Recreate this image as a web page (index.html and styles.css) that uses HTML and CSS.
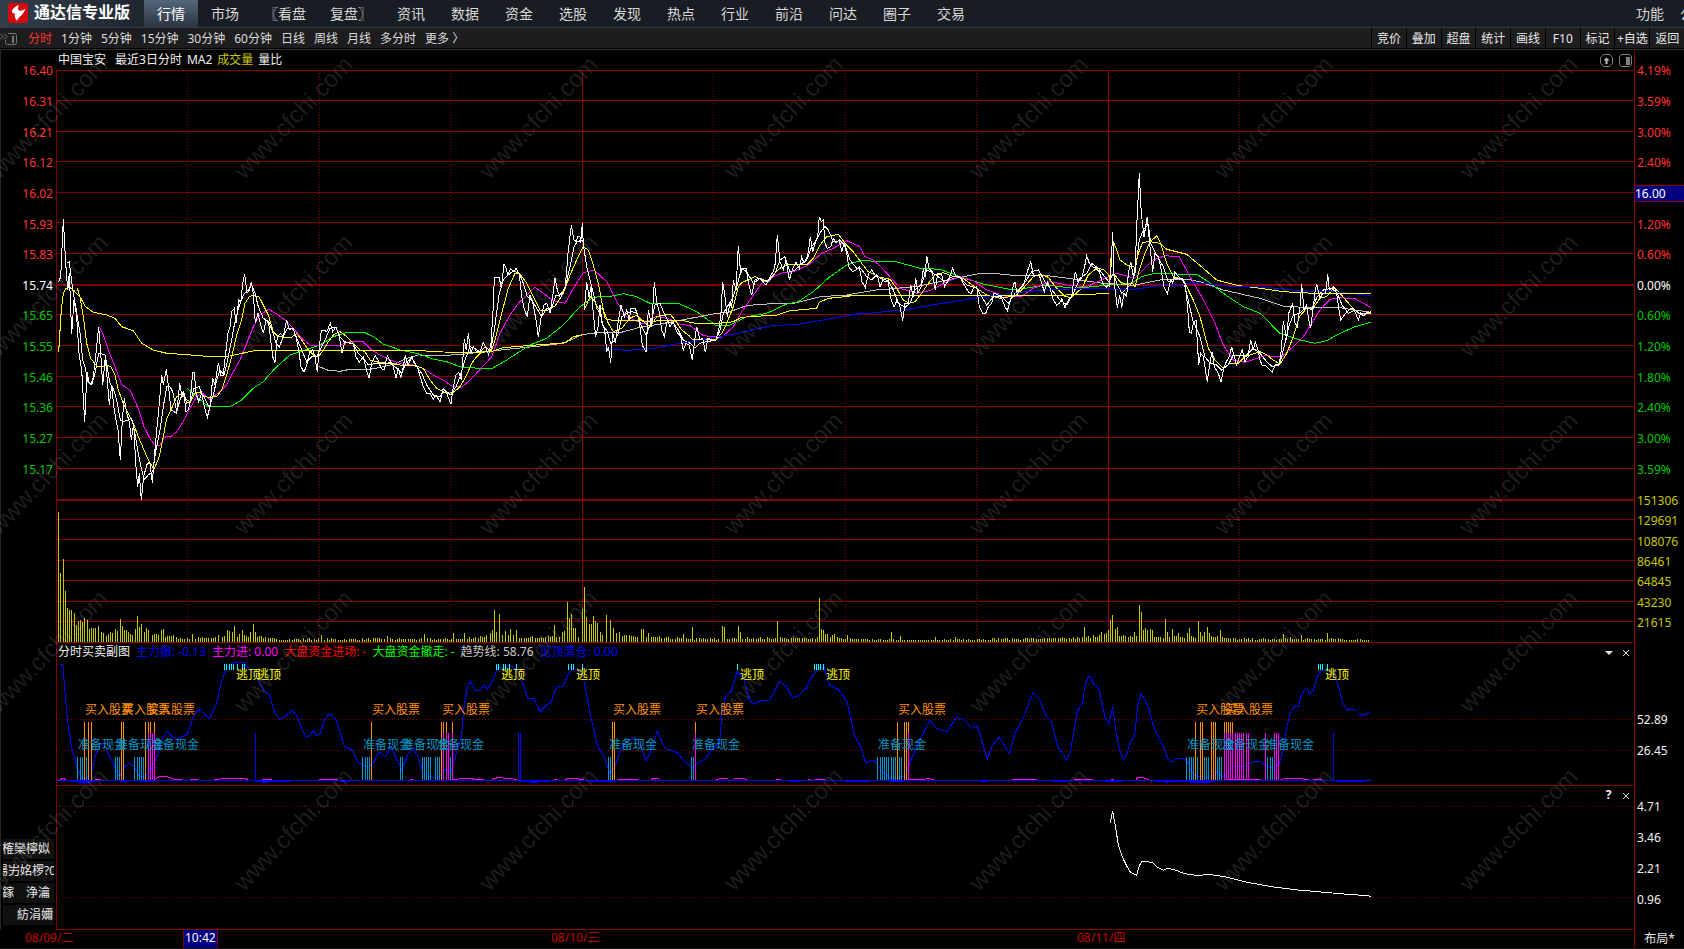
FILE: index.html
```html
<!DOCTYPE html>
<html lang="zh-CN">
<head>
<meta charset="utf-8">
<title>通达信专业版</title>
<link rel="stylesheet" href="styles.css">
</head>
<body>
<div class="app">
  <header class="topbar">
    <div class="brand">
      <svg class="logo" viewBox="0 0 20 20" aria-hidden="true">
        <rect width="20" height="20" rx="3" fill="#d40a10"/>
        <path d="M11 2C7 3.500 4 6 4 8.500C4 10 5.500 10.500 7 10.500C6.500 12.500 6.500 15 9 18C9.500 14.500 15.500 12.500 17.500 5.500C15 7.500 12.500 8 11 7.500C9.500 7 9.800 4.500 11 2Z" fill="#fff"/>
      </svg>
      <h1 class="title">通达信专业版</h1>
    </div>
    <nav class="menu">
      <a class="menu-item active" href="#">行情</a>
      <a class="menu-item" href="#">市场</a>
      <a class="menu-item" href="#">〖看盘</a>
      <a class="menu-item" href="#">复盘〗</a>
      <a class="menu-item" href="#">资讯</a>
      <a class="menu-item" href="#">数据</a>
      <a class="menu-item" href="#">资金</a>
      <a class="menu-item" href="#">选股</a>
      <a class="menu-item" href="#">发现</a>
      <a class="menu-item" href="#">热点</a>
      <a class="menu-item" href="#">行业</a>
      <a class="menu-item" href="#">前沿</a>
      <a class="menu-item" href="#">问达</a>
      <a class="menu-item" href="#">圈子</a>
      <a class="menu-item" href="#">交易</a>
    </nav>
    <nav class="extra">
      <a href="#">功能</a>
      <a href="#">公</a>
    </nav>
  </header>

  <div class="toolbar">
    <button class="tool-toggle" aria-label="侧栏">
      <svg viewBox="0 0 18 14" fill="none" stroke="#77777a"><path d="M0 1.500L3 4.500L0 7.500M4 1.500L7 4.500L4 7.500"/><path d="M8 1.500H14.500Q16.500 1.500 16.500 3.500V10.500Q16.500 12.500 14.500 12.500H7.500Q5.500 12.500 5.500 10.500V8"/><path d="M12.500 4V11M13.500 4V11"/></svg>
    </button>
    <div class="periods">
      <button class="period current">分时</button>
      <button class="period">1分钟</button>
      <button class="period">5分钟</button>
      <button class="period">15分钟</button>
      <button class="period">30分钟</button>
      <button class="period">60分钟</button>
      <button class="period">日线</button>
      <button class="period">周线</button>
      <button class="period">月线</button>
      <button class="period">多分时</button>
      <button class="period">更多&nbsp;〉</button>
    </div>
    <div class="actions">
      <button class="action">竞价</button>
      <button class="action">叠加</button>
      <button class="action">超盘</button>
      <button class="action">统计</button>
      <button class="action">画线</button>
      <button class="action">F10</button>
      <button class="action">标记</button>
      <button class="action">+自选</button>
      <button class="action">返回</button>
    </div>
  </div>

  <main class="board">
    <div class="left-axis price-left">
      <div class="axis-rows price-rows">
        <span class="up">16.40</span><span class="up">16.31</span><span class="up">16.21</span><span class="up">16.12</span><span class="up">16.02</span><span class="up">15.93</span><span class="up">15.83</span><span class="flat">15.74</span><span class="down">15.65</span><span class="down">15.55</span><span class="down">15.46</span><span class="down">15.36</span><span class="down">15.27</span><span class="down">15.17</span>
      </div>
    </div>
    <section class="panel">
      <svg class="plot" id="price" viewBox="56 50 1578 593" preserveAspectRatio="none"></svg>
      <div class="caption price-caption">
        <span class="stock">中国宝安</span><span>最近3日分时</span><span>MA2</span><span class="vol">成交量</span><span>量比</span>
        <span class="panel-tools">
          <button aria-label="上移"><svg viewBox="0 0 13 13" fill="none" stroke="#808080"><path d="M3.500 .5H9.500L12.500 3.500V9.500L9.500 12.500H3.500L.5 9.500V3.500Z"/><path d="M6.500 10V5" stroke="#c0c0c0" stroke-width="2"/><path d="M3.500 6.500L6.500 3.500L9.500 6.500Z" fill="#c0c0c0" stroke="none"/></svg></button>
          <button aria-label="侧栏"><svg viewBox="0 0 13 13" fill="none" stroke="#808080"><path d="M2.500 .5H10.500L12.500 2.500V10.500L10.500 12.500H2.500L.5 10.500V2.500Z"/><path d="M7 3H11V11H7Z" fill="#808080" stroke="none"/></svg></button>
        </span>
      </div>
    </section>
    <div class="right-axis">
      <div class="price-scale">
        <div class="axis-rows price-rows">
          <span class="up">4.19%</span><span class="up">3.59%</span><span class="up">3.00%</span><span class="up">2.40%</span><span class="cursor">16.00</span><span class="up">1.20%</span><span class="up">0.60%</span><span class="flat">0.00%</span><span class="down">0.60%</span><span class="down">1.20%</span><span class="down">1.80%</span><span class="down">2.40%</span><span class="down">3.00%</span><span class="down">3.59%</span>
        </div>
        <div class="axis-rows volume-rows">
          <span>151306</span><span>129691</span><span>108076</span><span>86461</span><span>64845</span><span>43230</span><span>21615</span>
        </div>
      </div>
    </div>

    <div class="left-axis"></div>
    <section class="panel">
      <svg class="plot" id="signal" viewBox="56 643 1578 143" preserveAspectRatio="none"></svg>
      <div class="caption">
        <span>分时买卖副图</span><span class="blue">主力撤: -0.13</span><span class="magenta">主力进: 0.00</span><span class="red">大盘资金进场: -</span><span class="green">大盘资金撤走: -</span><span class="silver">趋势线: 58.76</span><span class="blue">见顶清仓: 0.00</span>
        <span class="panel-tools">
          <button aria-label="菜单"><svg viewBox="0 0 13 13"><path d="M3 5H11L7 9Z" fill="#e0e0e0"/></svg></button>
          <button aria-label="关闭"><svg viewBox="0 0 13 13" stroke="#e0e0e0"><path d="M4 4L10 10M10 4L4 10"/></svg></button>
        </span>
      </div>
      <div class="marks" id="marks"></div>
    </section>
    <div class="right-axis"><div class="signal-scale"><div class="axis-rows signal-rows"><span>52.89</span><span>26.45</span></div></div></div>

    <div class="left-axis side-col">
      <div class="side-buttons">
        <button>榷欒檸姒</button>
        <button>瑒屴姳椤?0</button>
        <button>鎵　浄瀹</button>
        <button>：　紡涓嬭</button>
      </div>
    </div>
    <section class="panel">
      <svg class="plot" id="ratio" viewBox="56 786 1578 144" preserveAspectRatio="none"></svg>
      <div class="caption">
        <span class="panel-tools">
          <button aria-label="帮助">?</button>
          <button aria-label="关闭"><svg viewBox="0 0 13 13" stroke="#e0e0e0"><path d="M4 4L10 10M10 4L4 10"/></svg></button>
        </span>
      </div>
    </section>
    <div class="right-axis"><div class="ratio-scale"><div class="axis-rows ratio-rows"><span>4.71</span><span>3.46</span><span>2.21</span><span>0.96</span></div></div></div>
  </main>

  <footer class="timeline">
    <span>08/09/二</span>
    <span><span class="clock">10:42</span></span>
    <span>08/10/三</span>
    <span>08/11/四</span>
    <button class="layout">布局*</button>
  </footer>
  <svg class="watermark" id="watermark" aria-hidden="true"></svg>
</div>
<script src="chart.js"></script>
</body>
</html>
```

FILE: styles.css
```css
* { box-sizing: border-box; }
body {
  margin: 0;
  background: #000;
  color: #f0f0f0;
  font: 12px/16px "Noto Sans", "Noto Sans CJK SC", sans-serif;
}
button {
  padding: 0;
  border: 0;
  background: none;
  color: inherit;
  font: inherit;
  white-space: nowrap;
}
a { color: inherit; text-decoration: none; }

.app {
  position: relative;
  display: flex;
  flex-direction: column;
  height: 100vh;
  min-height: 600px;
  overflow: hidden;
}

/* Title bar */
.topbar {
  display: flex;
  flex: none;
  height: 28px;
  border-bottom: 1px solid #2f3b48;
  background: linear-gradient(90deg, #333e4b 0, #181c23 200px);
  position: relative;
  z-index: 2;
}
.brand { display: flex; flex: none; width: 144px; padding: 3px 0 0 8px; gap: 6px; }
.logo { width: 20px; height: 20px; }
.title { margin: 0; font-size: 16px; line-height: 18px; font-weight: 700; white-space: nowrap; color: #fff; }
.menu { display: flex; font-size: 14px; line-height: 28px; color: #d8d8d8; }
.menu-item { min-width: 54px; height: 27px; padding: 0 12px; text-align: center; white-space: nowrap; }
.menu-item.active { background: linear-gradient(#56677a, #2b3541); color: #fff; }
.extra {
  display: flex;
  flex: none;
  gap: 16px;
  width: 48px;
  margin-left: auto;
  overflow: hidden;
  font-size: 14px;
  line-height: 27px;
  white-space: nowrap;
  color: #d8d8d8;
}

/* Period toolbar */
.toolbar {
  display: flex;
  flex: none;
  height: 22px;
  background: #1d1d1f;
  border-bottom: 1px solid #303030;
  box-shadow: inset 0 -1px #000;
  position: relative;
  z-index: 2;
}
.tool-toggle { width: 18px; margin-right: 10px; }
.tool-toggle svg { display: block; width: 18px; height: 14px; }
.periods { display: flex; gap: 9px; color: #dcdcdc; }
.period { padding-top: 1px; }
.period.current { color: #ff3232; }
.actions { display: flex; width: 313px; margin-left: auto; color: #e8e8e8; }
.action { flex: 1; height: 20px; padding-top: 1px; border-left: 1px solid #000; overflow: hidden; }

/* Chart board */
.board {
  display: grid;
  flex: 1;
  grid-template-columns: 56px minmax(0, 1fr) 50px;
  grid-template-rows: 593fr 143fr 144fr;
  min-height: 0;
}
.left-axis { border-left: 1px solid #262626; min-height: 0; }
.right-axis { border-left: 1px solid #800000; min-height: 0; }
.price-left { display: grid; grid-template-rows: 6fr 429fr 158fr; padding-right: 3px; text-align: right; }
.price-scale { display: grid; grid-template-rows: 6fr 429fr 6fr 142fr 10fr; height: 100%; }
.signal-scale { display: grid; grid-template-rows: 62fr 61fr 20fr; height: 100%; }
.ratio-scale { display: grid; grid-template-rows: 5fr 124fr 15fr; height: 100%; }
.axis-rows { display: grid; grid-auto-rows: 1fr; grid-row: 2; align-items: center; min-height: 0; }
.right-axis .axis-rows span { padding-left: 2px; }
.right-axis .volume-rows { grid-row: 4; color: #c8c800; }
.up { color: #ff3232; }
.down { color: #00c800; }
.flat { color: #fff; }
.right-axis .axis-rows .cursor {
  padding-left: 0;
  border: solid #800000;
  border-width: 1px 0;
  background: #000080;
  color: #fff;
  line-height: 15px;
}

.panel { position: relative; min-height: 0; overflow: hidden; }
.plot { position: absolute; inset: 0; display: block; width: 100%; height: 100%; shape-rendering: crispEdges; }
.plot * { vector-effect: non-scaling-stroke; fill: none; }
.caption { position: relative; display: flex; gap: 6px; padding: 1px 2px; white-space: nowrap; }
.price-caption { padding-top: 2px; gap: 5px; }
.stock { margin-right: 4px; }
.vol { color: #c8c800; }
.blue { color: #0000f0; }
.magenta { color: #f0f; }
.red { color: #f00; }
.green { color: #0f0; }
.silver { color: #c8c8c8; }
.panel-tools { display: flex; gap: 4px; margin-left: auto; }
.panel-tools button { width: 13px; height: 16px; font-weight: 700; }
.panel-tools svg { display: block; width: 13px; height: 13px; }
.price-caption .panel-tools { gap: 6px; }

.marks span { position: absolute; white-space: nowrap; }
.mark-top { top: 17%; color: #ff0; }
.mark-buy { top: 41%; color: #ff9000; }
.mark-cash { top: 66%; color: #0096c8; }

.side-col { display: flex; align-items: flex-end; padding: 0 2px 5px; }
.side-buttons { display: grid; gap: 2px; width: 51px; }
.side-buttons button {
  display: flex;
  align-items: center;
  justify-content: center;
  height: 20px;
  padding-right: 5px;
  overflow: hidden;
  background: #101010;
  color: #e8e8e8;
}

/* Time axis */
.timeline {
  display: grid;
  flex: none;
  grid-template-columns: 158fr 368fr 526fr 557fr 50px;
  height: 19px;
  padding-left: 25px;
  border-bottom: 1px solid #181818;
  color: #c80000;
  white-space: nowrap;
}
.clock { display: inline-block; height: 18px; padding: 0 1px; border: solid #800000; border-width: 0 1px; background: #000080; color: #fff; }
.layout { border-left: 1px solid #800000; color: #e8e8e8; }

.watermark { position: absolute; inset: 0; width: 100%; height: 100%; pointer-events: none; }
.watermark text { font: 24px "Liberation Sans", sans-serif; fill: #fff; fill-opacity: .12; }
```

FILE: chart.js
```js
const NS = 'http://www.w3.org/2000/svg';
const price = document.getElementById('price');
const signal = document.getElementById('signal');
const ratio = document.getElementById('ratio');

// Recorded points live in tiles: origin x, origin y, units per pixel on each axis.
const tiles = {
  a: [0, 60, 3, 3], b: [440, 180, 3, 3], c: [820, 160, 3, 3], d: [1240, 60, 3, 3],
  e: [0, 490, 2.8, 3], f: [540, 560, 2.8, 3], g: [1090, 490, 2.64, 3], h: [1090, 780, 2.64, 3]
};
const RED = '#800000';

function path(svg, d, stroke, dash, width) {
  const p = document.createElementNS(NS, 'path');
  p.setAttribute('d', d);
  p.setAttribute('stroke', stroke);
  if (dash) p.setAttribute('stroke-dasharray', dash);
  if (width) p.setAttribute('stroke-width', width);
  svg.appendChild(p);
}
function series(svg, color, parts) {
  const pts = [];
  for (const [key, text] of parts) {
    const t = tiles[key];
    for (const pair of text.trim().split(/\s+/)) {
      const [x, y] = pair.split(',').map(Number);
      pts.push((t[0] + x / t[2]).toFixed(1) + ' ' + (t[1] + y / t[3]).toFixed(1));
    }
  }
  path(svg, 'M' + pts.join('L'), color);
}
const px = (key, x) => Math.floor(tiles[key][0] + x / tiles[key][2]) + 0.5;
function bars(color, top, bottom, groups) {
  let d = '';
  for (const key in groups) for (const x of groups[key]) d += `M${px(key, x)} ${top}V${bottom}`;
  path(signal, d, color);
}
const hline = (ys) => ys.map(y => `M56 ${y + 0.5}H1634`).join('');

// Grid
path(price, hline([70, 100, 131, 161, 192, 222, 253, 314, 345, 376, 406, 437, 468, 519, 539, 560, 580, 601, 621, 642]), RED);
path(price, 'M56 285H1634M56 500H1634', RED, '', 2);
path(price, 'M56.5 70V643M582.5 70V643M1108.5 70V643', RED);
path(price, [187, 319, 450, 713, 845, 976, 1239, 1371, 1502].map(x => `M${x + 0.5} 73V642`).join(''), RED, '1 2');
path(signal, hline([785]) + 'M56.5 643V786', RED);
path(signal, 'M59 719.5H1634M59 750.5H1634', RED, '1 2');
path(ratio, hline([929]) + 'M56.5 786V930', RED);
path(ratio, 'M59 806.5H1634M59 897.5H1634', RED, '1 2');

// Volume: base level by position, with the tall bars listed singly
const level = [[57, 12], [100, 8], [115, 8], [130, 9], [165, 8], [180, 4], [215, 4], [228, 7], [255, 8], [270, 3], [460, 3], [490, 7], [540, 5], [580, 6], [600, 9], [625, 6], [670, 4], [720, 3], [740, 4], [815, 4], [825, 7], [845, 3], [940, 2], [980, 3], [1085, 4], [1098, 7], [1112, 8], [1125, 6], [1160, 5], [1215, 7], [1225, 4], [1240, 3], [1340, 3], [1371, 2]];
const tall = {
  e: '163,130 169,69 177,83 183,51 189,34 195,32 201,32 208,29 214,17 220,21 226,22 231,20 236,24 245,22 251,13 257,14 263,14 268,14 275,16 323,13 329,11 337,23 343,16 349,12 355,12 379,13 385,26 391,15 397,18 404,10 410,14 416,12 452,12 458,13 540,8 612,7 637,12 642,11 650,10 656,16 679,12 700,10 709,18 715,10 900,7 1084,6 1188,8 1270,9 1300,9 1373,9 1379,12 1384,32 1390,10 1398,28 1415,11 1430,13 1446,12 1552,17',
  f: '40,17 62,10 68,11 77,40 82,24 88,28 94,14 99,14 119,33 124,55 130,25 138,18 144,18 149,26 155,21 161,19 169,10 186,27 197,22 205,14 222,10 284,13 290,13 303,9 401,8 427,15 511,16 516,15 555,16 561,10 665,21 782,44 788,13 794,12 800,8 806,8 824,8 860,7 984,10 1009,6 1107,5 1163,5 1524,15 1549,7',
  g: '30,10 48,12 54,22 60,27 67,13 72,15 117,10 130,37 136,30 142,12 147,14 152,12 159,13 164,12 199,23 205,10 217,13 233,9 257,9 262,14 286,21 291,10 303,10 309,15 315,9 345,12 510,8 530,5 558,7 627,9'
};
const volume = new Map();
let seed = 7;
let k = 0;
for (let i = 0; i < 600; i++) {
  const x = 58 + i * 1313 / 600;
  while (k < level.length - 2 && level[k + 1][0] < x) k++;
  const [x0, h0] = level[k], [x1, h1] = level[k + 1];
  seed = (seed * 16807) % 2147483647;
  const h = (h0 + (h1 - h0) * (x - x0) / (x1 - x0)) * (0.65 + 0.6 * seed / 2147483647);
  volume.set(Math.floor(x), Math.max(1, Math.round(h)));
}
for (const key in tall) for (const pair of tall[key].split(' ')) {
  const [tx, h] = pair.split(',').map(Number);
  const x = px(key, tx) - 0.5;
  volume.delete(x - 1);
  volume.delete(x + 1);
  volume.set(x, h);
}
path(price, [...volume].map(([x, h]) => `M${x + 0.5} ${642 - h}V642`).join(''), '#c8c800');

// Moving averages, slowest first
series(price, '#c0c0c0', [
  ['a', '958,920 985,931 1020,934 1050,928 1110,928 1150,920 1190,910 1220,895 1255,885 1330,886 1380,884 1440,876'],
  ['b', '160,513 200,508 300,498 370,490 427,464 470,458 540,458 600,442 700,425 820,402 870,395 910,380 950,373 1060,370 1140,350 1220,345 1320,328'],
  ['c', '200,388 300,378 380,360 470,342 530,341 590,347 690,348 760,357 850,370 940,376 980,368 1030,358 1100,358 1140,365 1210,390 1320,415'],
  ['d', '130,738 220,744 290,742 392,757']]);
series(price, '#00ff00', [
  ['a', '562,985 590,1010 625,1040 690,1040 725,1020 760,985 790,965 825,925 870,885 910,872 960,855 1000,830 1045,816 1090,816 1120,830 1150,852 1200,870 1250,880 1300,897 1340,905 1385,922 1440,925'],
  ['b', '0,542 75,565 157,565 200,540 270,495 320,475 370,435 420,380 460,352 515,348 550,341 590,350 630,370 720,372 770,395 830,438 870,435 920,410 980,400 1040,372 1075,365 1120,335 1170,290 1220,255 1265,241 1320,245'],
  ['c', '220,303 300,325 360,328 420,350 490,372 580,390 680,375 760,385 820,380 860,375 935,370 965,350 1000,341 1130,343 1165,365 1210,400 1270,440 1320,460'],
  ['d', '120,820 180,840 225,850 260,842 290,825 340,802 392,787']].map(([key, text]) => [key, key === 'b' ? text.replace('0,542 75,565 ', '') : text]));
series(price, '#ff00ff', [
  ['a', '298,800 310,825 325,870 345,920 365,975 390,990 415,1045 432,1100 450,1135 465,1155 480,1155 495,1130 515,1128 530,1115 550,1085 570,1045 590,1010 605,998 630,1018 660,995 680,975 700,935 720,900 740,850 760,800 780,765 795,755 806,748 830,762 855,780 880,805 910,840 935,858 980,855 1020,855 1050,845 1090,845 1115,870 1140,885 1170,900 1210,913 1240,915 1270,925 1300,945 1330,960 1355,978 1385,982 1410,960'],
  ['b', '100,590 155,530 180,460 210,405 235,370 285,322 310,340 340,362 375,370 400,325 430,278 462,270 500,305 530,365 560,410 610,432 650,408 690,418 720,432 750,437 790,467 845,472 880,440 905,395 965,310 1020,280 1060,275 1105,255 1145,220 1180,205 1220,182 1260,200 1275,230 1300,240 1320,258'],
  ['c', '210,350 240,385 290,400 330,392 380,365 420,350 460,362 500,390 560,410 605,408 640,385 690,365 740,375 800,380 866,350 890,340 945,355 975,325 1000,300 1035,287 1078,290 1110,350 1145,410 1185,490 1210,555 1240,600 1275,607 1320,592'],
  ['d', '75,887 125,890 160,860 190,830 215,790 240,750 270,718 300,713 345,716 392,742']]);
series(price, '#ffff00', [
  ['a', '232,685 240,710 250,770 260,850 272,895 290,918 305,920 320,915 332,920 345,945 355,990 370,1030 385,1060 400,1090 415,1130 430,1165 445,1200 462,1228 478,1190 490,1130 500,1075 515,1045 530,1010 545,1000 560,1020 572,1025 585,1000 600,997 612,1010 630,1012 650,1010 665,990 680,945 695,890 710,825 725,780 735,730 748,710 762,705 778,712 790,735 805,765 820,815 835,830 860,832 875,832 890,820 905,840 925,870 940,885 955,890 970,870 985,845 1000,825 1020,815 1040,830 1060,850 1080,870 1095,875 1110,900 1140,908 1170,910 1200,915 1245,918 1270,925 1290,960 1310,985 1340,1000 1360,998 1380,980 1400,945 1415,910 1430,890'],
  ['b', '120,520 155,510 165,480 185,400 205,325 225,280 240,282 260,310 280,350 300,390 320,392 345,378 370,340 390,285 410,240 430,200 445,210 460,255 475,310 490,390 505,430 520,455 545,445 570,415 590,405 610,425 630,440 650,410 690,402 705,420 725,450 745,465 760,480 790,478 828,480 845,460 860,430 880,380 895,320 905,308 945,290 980,305 1000,285 1020,265 1045,253 1100,255 1120,235 1140,195 1160,170 1195,163 1215,190 1240,215 1265,250 1285,275 1305,285 1320,292'],
  ['c', '210,358 230,385 250,420 268,430 285,425 305,400 325,370 345,345 370,338 395,348 430,355 470,385 500,405 540,415 585,408 610,385 640,350 660,343 685,352 710,385 735,410 755,412 785,385 805,345 830,325 850,328 866,345 885,345 900,365 920,375 935,368 945,380 958,330 975,280 990,245 1010,228 1020,245 1040,310 1060,350 1090,358 1105,390 1120,420 1140,470 1165,565 1185,600 1210,625 1230,610 1255,610 1275,590 1320,575'],
  ['d', '80,885 100,900 120,913 140,880 160,830 178,770 200,745 218,745 240,715 260,710 282,683 300,700 330,735 355,760 392,760']]);
series(price, '#ffffff', [
  ['a', '200,610 208,605 217,680 228,745 240,820 248,900 256,925 264,965 275,975 285,940 296,880 306,882 316,885 322,925 330,970 340,985 350,1020 361,1080 370,1085 385,1080 395,1075 403,1110 413,1170 424,1225 433,1258 445,1245 458,1235 468,1170 480,1110 490,1040 500,980 510,980 518,995 530,1055 540,1020 550,995 560,1030 572,1025 582,985 598,980 605,1000 614,1015 628,1042 640,1005 650,960 660,930 672,945 682,905 692,855 703,795 715,745 730,705 745,690 755,675 765,700 775,740 790,775 806,785 818,815 828,850 838,860 850,830 862,805 880,808 890,835 905,870 920,905 935,890 950,890 960,870 975,840 990,805 1008,802 1020,830 1035,848 1060,850 1075,880 1090,895 1105,915 1130,910 1150,912 1170,908 1190,925 1205,940 1220,905 1237,895 1250,920 1265,940 1280,975 1300,1005 1320,1010 1335,990 1352,1005 1368,980 1380,950 1395,900 1410,860 1425,865'],
  ['b', '120,517 135,500 152,512 163,450 178,340 190,300 205,285 220,272 238,280 250,310 262,350 275,360 290,385 305,410 320,385 335,385 348,345 360,345 375,325 390,260 402,200 412,185 428,180 440,260 450,300 460,340 470,385 480,400 490,440 500,450 512,490 522,485 535,460 545,410 560,400 575,395 590,400 605,440 618,465 632,430 645,375 660,370 672,400 685,425 700,430 715,450 730,480 750,490 765,505 780,490 800,485 828,480 840,450 850,400 862,380 875,360 890,320 905,265 920,275 940,310 960,295 985,305 1005,280 1020,240 1035,230 1050,275 1065,270 1080,255 1100,240 1115,200 1130,180 1142,155 1155,140 1165,150 1180,185 1200,182 1215,195 1230,240 1250,265 1262,265 1280,290 1295,300 1310,285'],
  ['c', '180,355 205,362 220,390 235,430 255,442 270,430 285,390 305,370 320,330 340,340 355,350 372,365 400,348 420,352 440,375 470,385 485,410 500,435 520,410 545,410 565,430 585,400 610,375 635,335 655,330 675,365 700,395 720,420 740,435 760,400 780,355 800,340 815,310 835,325 850,345 866,365 880,340 890,370 905,400 920,385 935,370 945,340 958,240 970,210 985,195 992,250 1010,285 1030,320 1045,365 1065,355 1088,355 1100,400 1118,480 1140,530 1155,590 1170,610 1190,615 1205,630 1225,615 1240,585 1260,588 1280,585 1300,565'],
  ['d', '60,880 80,905 97,920 118,915 130,870 146,800 160,765 178,760 195,745 215,748 232,710 250,690 275,685 292,700 306,735 325,760 345,750 360,762 392,757']]);

// Daily average price, restarted each session
series(price, '#ffff00', [
  ['a', '176,875 184,750 190,700 198,685 210,683 222,692 240,710 255,738 280,757 318,764 345,775 365,800 400,812 425,850 460,870 500,880 560,884 620,889 690,888 740,877 770,871 1240,871 1330,876 1440,877'],
  ['b', '160,513 190,503 260,497 360,490 378,487 400,470 427,464']]);
series(price, '#ffff00', [
  ['b', '433,390 450,350 465,365 475,385 488,385 495,415 520,422 600,420 620,425 690,420 735,423 765,430 840,430 880,425 905,412 1010,405 1050,392 1130,385 1138,367 1165,355 1230,349'],
  ['c', '180,349 180,349'].slice(0, 0).length ? [] : ['c', '80,408 690,406 790,404 866,400']]);
series(price, '#ffff00', [
  ['c', '868,380 875,260 880,245 888,265 900,300 920,315 945,322 955,280 968,247 990,245 1020,250 1040,268 1100,283 1150,325 1190,360 1250,376 1320,385'],
  ['d', '130,695 220,700 392,700']]);

// Long average, drawn over the session averages
series(price, '#0000ff', [
  ['b', '490,508 570,511 640,505 720,490 820,473 880,463 990,438 1080,432 1160,418 1260,400'],
  ['c', '110,463 250,450 350,433 470,413 600,397 700,388 800,386 940,388 1040,374 1150,370 1240,380 1320,381'],
  ['d', '90,683 180,692 320,697']]);
series(price, '#0000ff', [['d', '350,702 375,704 392,709']]);

// Price
series(price, '#ffffff', [
  ['a', '176,665 182,650 190,478 197,610 203,690 208,640 215,822 222,720 230,770 237,880 245,930 254,1085 261,935 267,965 273,975 280,950 288,880 296,800 302,880 308,975 316,890 322,960 328,1035 335,975 341,1040 348,1080 354,1110 361,1200 367,1080 373,1015 380,1060 388,1085 394,1140 401,1090 407,1210 413,1280 418,1240 424,1320 431,1250 440,1215 449,1205 457,1268 464,1180 470,1110 477,1040 485,945 490,975 499,928 506,985 513,1050 522,1055 530,1060 539,968 546,1010 552,1000 558,1055 564,1050 570,1030 578,937 583,937 588,1000 596,1025 605,1000 614,1045 622,1072 630,1040 638,955 645,975 655,908 662,945 670,945 676,890 684,820 690,800 695,755 703,745 708,790 716,720 722,730 728,670 734,642 741,700 748,690 754,665 760,700 766,790 774,760 781,790 790,820 798,780 806,790 812,840 818,890 825,908 832,830 842,820 850,830 860,780 868,808 880,806 888,830 896,870 903,920 912,937 920,915 928,880 938,870 945,890 952,937 957,870 964,812 972,810 980,815 991,790 998,815 1008,800 1018,830 1026,880 1034,845 1045,848 1060,850 1068,890 1078,907 1090,890 1098,925 1107,955 1116,905 1126,887 1134,900 1143,925 1152,930 1162,887 1172,905 1180,920 1188,955 1195,925 1202,955 1210,920 1216,885 1224,915 1235,890 1243,910 1252,920 1262,955 1270,980 1280,1000 1290,1000 1300,1018 1308,1005 1320,1025 1330,985 1340,1000 1353,1033 1360,980 1368,945 1376,937 1384,960 1393,838 1399,870 1405,820 1412,880 1420,860 1430,875'],
  ['b', '120,515 130,487 138,505 146,525 153,490 160,380 163,293 178,293 184,325 192,253 198,265 203,285 212,265 220,275 229,265 238,285 245,350 252,385 262,410 270,345 280,375 288,420 295,470 303,415 312,375 320,370 330,400 340,335 345,293 352,330 362,355 370,330 376,320 384,220 394,136 402,180 410,185 412,170 420,170 422,188 427,130 430,190']]);
series(price, '#ffffff', [
  ['b', '433,390 440,305 447,350 453,320 460,400 467,470 474,440 480,375 486,430 494,450 500,515 505,500 512,548 518,460 526,490 534,430 543,375 553,410 560,390 568,420 573,385 585,385 592,400 600,440 607,495 618,517 625,390 635,440 643,305 650,365 658,395 665,450 673,470 682,420 690,440 700,425 710,455 722,470 730,510 738,490 748,495 757,540 764,480 770,440 780,480 788,475 796,517 804,475 815,480 828,480 838,440 843,400 848,305 855,350 862,410 870,370 875,385 880,300 888,330 895,197 902,280 908,265 918,265 928,320 935,345 945,300 955,295 965,300 978,315 990,290 1000,275 1006,250 1012,165 1020,245 1030,270 1038,240 1048,300 1058,265 1068,245 1078,265 1085,230 1092,250 1100,235 1106,210 1111,170 1118,215 1128,180 1133,170 1138,110 1144,125 1150,120 1155,190 1162,205 1172,200 1180,175 1188,190 1198,180 1205,215 1212,190 1220,220 1226,260 1238,275 1248,270 1258,260 1266,305 1276,322 1286,280 1295,270 1305,285 1313,290'],
  ['c', '180,380 188,362 205,365 212,415 222,440 232,420 240,440 248,482 255,430 265,430 272,375 280,410 287,355 294,400 303,380 310,325 315,350 320,287 327,325 337,335 346,390 353,340 365,345 374,380 385,360 398,325 408,350 420,350 430,370 445,395 453,402 460,385 470,380 478,440 488,460 497,460 505,440 515,430 522,400 535,405 545,415 555,440 562,452 572,420 580,375 585,365 592,405 600,385 612,370 622,335 632,305 640,345 658,345 665,370 673,395 682,365 690,385 700,420 710,435 718,430 725,415 735,443 745,420 755,410 760,370 766,335 774,365 785,355 793,325 800,287 808,310 818,320 828,325 838,335 848,370 858,382 866,375']]);
series(price, '#ffffff', [
  ['c', '868,380 872,340 878,217 883,370 892,443 899,405 905,443 912,400 920,410 925,340 932,305 940,350 946,320 950,200 958,40 964,160 972,230 982,170 988,240 998,335 1005,280 1015,290 1022,320 1032,380 1042,402 1052,360 1058,370 1064,335 1075,350 1088,360 1095,370 1102,430 1108,515 1114,520 1120,490 1128,480 1136,615 1142,580 1150,590 1162,665 1168,620 1176,575 1183,620 1195,640 1203,665 1212,620 1222,600 1228,590 1235,560 1243,590 1250,615 1258,590 1267,570 1275,605 1284,590 1292,540 1300,570 1306,545 1314,570'],
  ['d', '60,900 66,915 75,915 85,925 97,937 105,915 118,912 124,870 130,782 140,840 146,760 158,730 165,790 172,800 180,740 185,672 192,750 200,735 206,780 212,805 220,740 226,690 230,672 240,715 248,700 257,700 263,642 268,690 282,680 290,700 296,745 302,780 310,770 320,755 335,745 345,755 355,780 362,760 370,768 380,760 392,755']]);

// Trend line of the signal panel
series(signal, '#0000ff', [
  ['e', '168,522 176,524 183,620 190,700 200,770 215,830 228,865 240,868 255,855 268,795 280,760 295,770 310,805 325,840 335,860 345,835 360,820 375,828 390,858 402,860 420,845 440,800 455,745 468,723 480,738 495,748 525,732 540,685 550,665 562,658 575,675 587,685 605,645 620,575 635,535 655,517 683,517 700,540 720,560 740,605 755,615 768,665 782,688 795,682 818,660 832,680 845,715 855,738 865,738 878,723 887,737 897,730 908,690 922,672 940,688 950,720 965,770 985,780 1005,820 1030,830 1045,820 1060,785 1080,800 1095,770 1110,805 1125,840 1140,800 1155,775 1170,800 1185,850 1205,860 1225,865 1245,840 1262,850 1272,810 1292,740 1300,640 1310,585 1318,575 1330,600 1345,602 1355,585 1365,597 1380,570 1395,530 1410,537 1425,525 1450,540 1465,585 1478,625 1495,625'],
  ['f', '0,455 18,435 32,425 40,395 50,380 65,378 78,345 95,322 110,335 120,345 128,390 140,460 162,560 180,590 195,640 210,620 225,570 240,545 265,532 280,550 297,602 312,570 328,513 350,565 385,578 400,600 428,625 440,608 462,598 480,570 503,545 510,460 520,405 535,395 552,335 570,355 585,415 597,433 620,420 640,422 655,400 670,363 690,380 707,413 725,405 745,385 760,352 780,325 795,320 810,375 835,388 860,425 880,525 898,560 912,608 935,600 955,630 980,655 1005,655 1025,645 1040,595 1055,560 1075,515 1092,480 1107,503 1140,515 1165,473 1185,477 1210,505 1225,497 1252,598 1268,555 1285,532 1300,555 1315,580 1330,520 1355,470 1380,398 1400,420 1415,465 1432,485 1450,560 1475,602 1485,575 1505,450 1518,435 1528,370 1536,348'],
  ['g', '0,558 10,583 22,592 32,640 40,685 50,700 60,652 68,720 78,780 88,810 98,790 105,760 118,735 126,650 134,613 145,630 155,655 165,700 180,740 192,765 205,805 215,818 225,806 245,804 258,815 268,845 280,860 320,862 335,845 350,860 365,850 378,828 410,828 435,813 450,815 465,828 485,835 500,820 510,780 518,720 528,670 540,650 550,650 558,615 572,592 580,613 590,600 600,560 610,543 630,540 645,555 658,595 668,645 680,660 697,657 710,672 722,676 740,667']]);
path(signal, 'M57 780.5H1371', '#0000ff');
path(signal, 'M70 781.5H95M120 781.5H127M140 781.5H152M255 781.5H290M340 781.5H350M520 781.5H550M590 781.5H615M790 781.5H800M845 781.5H870M890 781.5H905M980 781.5H987M1053 781.5H1067M1103 781.5H1122M1155 781.5H1215M1337 781.5H1364M78 782.5H90M83 783.5H85M262 782.5H268M530 782.5H538M1165 782.5H1169M1190 782.5H1210', '#0000ff');
path(signal, 'M60 780L63 778L66 780M95 779.5H101M154 779.5L160 776.5L165 776L170 777.5L174 779.5H182M190 779.5H198M214 779.5L226 778.5H245L248 779.5M262 779.5H272M319 779.5H338M410 779.5H413M453 779.5L464 778.5H472L475 779.5H484M492 779.5L498 777.5L508 778.5L517 779.5M554 779.5H557M565 779.5L568 778.5H577L580 779.5H584M618 779.5H638M651 779.5L654 778.5H658L660 779.5M716 779.5L722 778.5H728M733 779.5L735 778.5H743L747 779.5M776 779.5H781M808 779.5H811M815 779.5H825M908 779.5H925L927 778.5L934 779.5M1012 779.5H1037M1074 779.5H1093M1111 779.5H1114M1136 779.5L1138 777.5H1142L1149 779.5M1226 779.5H1261M1281 779.5L1285 778.5H1296L1309 779.5M1313 779.5H1322', '#ff00ff');

// Signal bars
bars('#0096c8', 757, 780, {
  e: [217, 225, 231, 242, 323, 329, 334, 376, 385, 390, 396, 401, 1015, 1023, 1029, 1034, 1121, 1126, 1183, 1188, 1194, 1200, 1206, 1218, 1224, 1230, 1261],
  f: [191, 197, 424, 430, 945, 953, 959, 964, 970, 975, 984, 989, 995, 1006, 1012],
  g: [254, 262, 268, 273, 283, 302, 307, 312, 336, 341, 347, 468, 476, 481]
});
bars('#ff9000', 722, 780, {
  e: [236, 247, 256, 340, 345, 407, 415, 421, 432, 1040, 1236, 1241, 1250, 1267],
  f: [203, 208, 435, 1001, 1020, 1026, 1031],
  g: [278, 291, 297, 320, 326, 331, 355, 360, 365, 371, 376]
});
bars('#ff00ff', 733, 780, {
  e: [415, 421, 426, 432, 1241, 1250, 1255, 1267],
  f: [435, 1031],
  g: [355, 360, 365, 371, 376, 384, 389, 394, 400, 405, 412, 418, 463, 487, 492, 497]
});
bars('#0000ff', 733, 780, { e: [715, 1451, 1457], g: [642] });
bars('#00ffff', 664, 670, {
  e: [628, 634, 642, 648, 654, 665, 679, 684, 1390, 1395, 1409, 1415, 1426, 1446],
  f: [79, 88, 94, 118, 553, 768, 774, 780, 786, 794],
  g: [603, 608, 613, 627]
});

// Signal labels
const marks = document.getElementById('marks');
const labels = [
  ['逃顶', 'mark-top', [236, 257, 501, 576, 740, 826, 1325]],
  ['买入股票', 'mark-buy', [85, 122, 147, 372, 442, 613, 696, 898, 1196, 1225]],
  ['准备现金', 'mark-cash', [78, 116, 151, 363, 402, 436, 609, 692, 878, 1187, 1222, 1266]]
];
for (const [text, cls, xs] of labels) for (const x of xs) {
  const s = document.createElement('span');
  s.className = cls;
  s.textContent = text;
  s.style.left = ((x - 56) / 1578 * 100).toFixed(2) + '%';
  marks.appendChild(s);
}

// Volume ratio
series(ratio, '#ffffff', [['h', '53,130 60,93 67,140 75,195 85,230 98,260 107,277 123,286 130,258 137,244 165,247 178,262 195,271 203,265 220,268 250,281 280,286 320,284 360,291 420,308 490,322 550,330 610,336 670,342 720,346 742,349']]);

// Watermark tiling
const mark = document.getElementById('watermark');
for (let y = 180; y < innerHeight + 180; y += 178) for (let x = -1; x < innerWidth; x += 245) {
  const t = document.createElementNS(NS, 'text');
  t.setAttribute('transform', `translate(${x} ${y}) rotate(-46)`);
  t.textContent = 'www.cfchi.com';
  mark.appendChild(t);
}
```
